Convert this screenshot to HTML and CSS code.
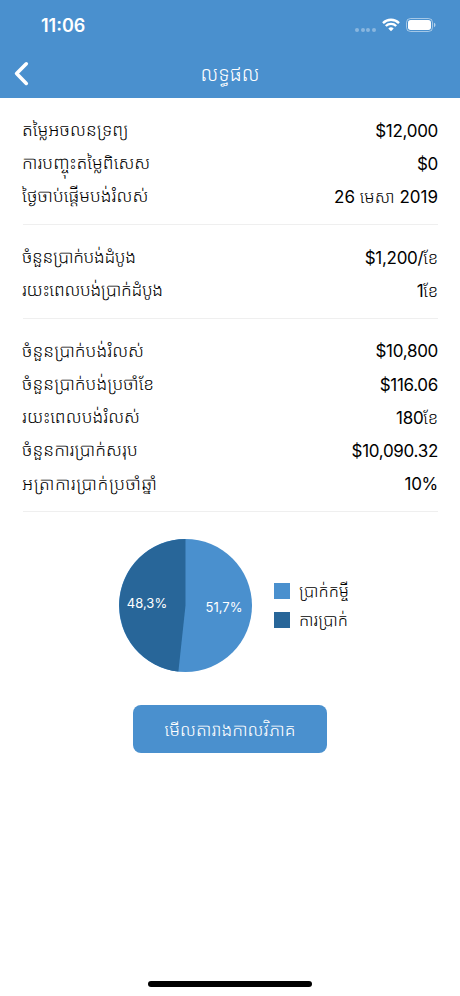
FILE: index.html
```
<!doctype html>
<html lang="km">
  <head>
    <meta charset="UTF-8" />
    <meta name="viewport" content="width=device-width, initial-scale=1.0" />
    <title>លទ្ធផល</title>
    <link rel="stylesheet" href="styles.css">
  </head>
  <body>
    <header class="header">
      <div class="status-bar">
        <span class="time">11:06</span>
        <div class="status-icons">
          <span class="signal"><i></i><i></i><i></i><i></i></span>
          <svg class="wifi" width="18" height="14" viewBox="0 0 18 14">
            <path d="M1 5.1a11.4 11.4 0 0 1 16 0M3.8 8a7.4 7.4 0 0 1 10.4 0" fill="none" stroke="#fff" stroke-width="2.4" />
            <path d="M6.3 10.5a3.9 3.9 0 0 1 5.4 0L9 13.3z" fill="#fff" />
          </svg>
          <svg class="battery" width="30" height="14" viewBox="0 0 30 14">
            <rect x="0.5" y="0.5" width="26" height="13" rx="4" fill="none" stroke="#fff" stroke-opacity="0.5" />
            <rect x="2" y="2" width="23" height="10" rx="2.7" fill="#fff" />
            <path d="M28 4.8v4.4q1.5-.6 1.5-2.2T28 4.8z" fill="#fff" fill-opacity="0.6" />
          </svg>
        </div>
      </div>
      <div class="nav-bar">
        <svg class="back" width="17" height="26" viewBox="0 0 17 26">
          <path d="M13.3 2.8 3.6 12.6l9.7 9.8" fill="none" stroke="#fff" stroke-width="3.6" stroke-linecap="round" stroke-linejoin="round" />
        </svg>
        <h1>លទ្ធផល</h1>
      </div>
    </header>

    <main>
      <section class="group">
        <div class="row"><span>តម្លៃអចលនទ្រព្យ</span><b>$12,000</b></div>
        <div class="row"><span>ការបញ្ចុះតម្លៃពិសេស</span><b>$0</b></div>
        <div class="row"><span>ថ្ងៃចាប់ផ្តើមបង់រំលស់</span><b class="date">26 <em>មេសា</em> 2019</b></div>
      </section>
      <section class="group">
        <div class="row tight"><span>ចំនួនប្រាក់បង់ដំបូង</span><b>$1,200/<em>ខែ</em></b></div>
        <div class="row tight"><span>រយះពេលបង់ប្រាក់ដំបូង</span><b>1<em>ខែ</em></b></div>
      </section>
      <section class="group">
        <div class="row"><span>ចំនួនប្រាក់បង់រំលស់</span><b>$10,800</b></div>
        <div class="row"><span>ចំនួនប្រាក់បង់ប្រចាំខែ</span><b>$116.06</b></div>
        <div class="row"><span>រយះពេលបង់រំលស់</span><b>180<em>ខែ</em></b></div>
        <div class="row"><span>ចំនួនការប្រាក់សរុប</span><b>$10,090.32</b></div>
        <div class="row wide"><span>អត្រាការប្រាក់ប្រចាំឆ្នាំ</span><b>10%</b></div>
      </section>

      <div class="chart">
        <svg class="pie" width="134" height="134" viewBox="0 0 134 134">
          <circle cx="66.5" cy="66.5" r="66.5" fill="#4a90ce" />
          <path d="M66.5 66.5V0a66.5 66.5 0 0 0-7.1 132.6z" fill="#286699" />
          <text x="28" y="69">48,3%</text>
          <text x="105" y="73">51,7%</text>
        </svg>
        <ul class="legend">
          <li><i class="loan"></i><span>ប្រាក់កម្ចី</span></li>
          <li><i class="interest"></i><span>ការប្រាក់</span></li>
        </ul>
      </div>

      <button class="schedule-btn">មើលតារាងកាលវិភាគ</button>
    </main>

    <div class="home-indicator"></div>
  </body>
</html>
```
FILE: styles.css
```
* {
  box-sizing: border-box;
}

body {
  margin: 0;
  height: 996px;
  display: flex;
  flex-direction: column;
  background-color: #fff;
  color: #000;
  font-family: Inter, 'Noto Sans Khmer', 'Noto Sans', sans-serif;
  overflow: hidden;
}

.header {
  height: 98px;
  background-color: #4a90ce;
  color: #fff;
}

.status-bar {
  display: flex;
  justify-content: space-between;
  align-items: center;
  height: 50px;
  padding: 0 24px 0 41px;
}

.time {
  font-size: 18px;
  font-weight: 600;
}

.status-icons {
  display: flex;
  align-items: center;
}

.signal {
  display: flex;
  gap: 1.7px;
  margin: 9px 6px 0 0;
}

.signal i {
  width: 4px;
  height: 4px;
  border-radius: 50%;
  background-color: rgba(255, 255, 255, 0.35);
}

.wifi {
  margin-right: 6px;
}

.nav-bar {
  display: grid;
  grid-template-columns: 30px 1fr 30px;
  align-items: center;
  height: 48px;
  padding: 0 13px;
}

.nav-bar h1 {
  margin: 0;
  font-size: 19.6px;
  font-weight: 300;
  line-height: 46px;
  text-align: center;
}

main {
  flex: 1;
}

.group {
  margin: 0 22px 0 23px;
  padding: 16px 0 10.4px;
  border-bottom: 1px solid #efefef;
}

.row {
  display: flex;
  justify-content: space-between;
  align-items: center;
  height: 33.2px;
  font-size: 17px;
  white-space: nowrap;
}

.row span {
  margin-left: -1px;
  padding-bottom: 3px;
  font-size: 17.6px;
  font-weight: 350;
}

.row b {
  font-weight: 400;
  letter-spacing: -0.3px;
}

.row em {
  font-style: normal;
  font-weight: 300;
}

.row .date {
  letter-spacing: 0;
}

.tight span {
  letter-spacing: -0.4px;
}

.wide span {
  letter-spacing: 0.55px;
}

.chart {
  display: flex;
  align-items: center;
  gap: 21px;
  margin: 26.5px 0 0 119px;
}

.pie text {
  fill: #fff;
  font-size: 13px;
  text-anchor: middle;
}

.legend {
  margin: 0;
  padding: 0;
  list-style: none;
}

.legend li {
  display: flex;
  align-items: center;
  gap: 9px;
  height: 29px;
  font-size: 16.6px;
  font-weight: 350;
}

.legend span {
  padding-bottom: 2px;
}

.legend i {
  width: 16px;
  height: 16px;
}

.loan {
  background-color: #4a90ce;
}

.interest {
  background-color: #286699;
}

.schedule-btn {
  display: block;
  width: 194px;
  height: 48px;
  margin: 32.5px auto 0;
  padding-bottom: 2px;
  border: none;
  border-radius: 8px;
  background-color: #4a90ce;
  color: #fff;
  font: inherit;
  font-size: 17.6px;
  font-weight: 300;
}

.home-indicator {
  width: 164px;
  height: 6px;
  margin: 0 auto 9px;
  border-radius: 3px;
  background-color: #000;
}
```
